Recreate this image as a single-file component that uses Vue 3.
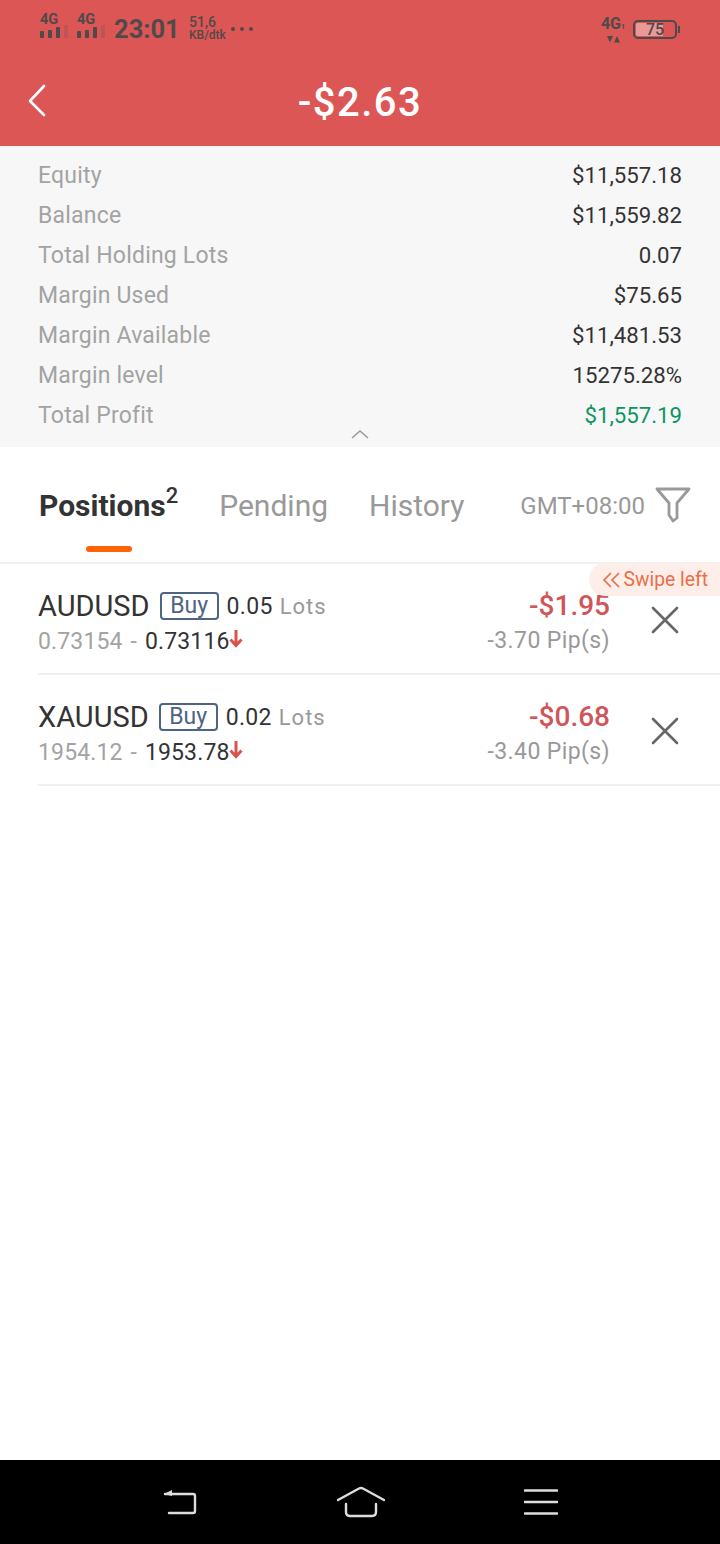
<template>
  <div class="page">
    <header class="top">
      <div class="status">
        <div class="status-left">
          <div v-for="n in 2" :key="n" class="signal">
            <span class="signal-label">4G</span>
            <span class="bars"><i></i><i></i><i></i><i class="dim"></i></span>
          </div>
          <span class="clock">23:01</span>
          <span class="speed"><span>51,6</span><span>KB/dtk</span></span>
          <span class="dots"><i></i><i></i><i></i></span>
        </div>
        <div class="status-right">
          <div class="net">
            <span class="net-label">4G<small>1</small></span>
            <svg class="net-arrows" width="13" height="7" viewBox="0 0 13 7"><path d="M0 0h6L3 6.500zM7 6.500h6L10 0z" fill="#4f4a4a" /></svg>
          </div>
          <div class="battery">
            <div class="battery-body"><span class="battery-fill"></span><span class="battery-num">75</span></div>
            <span class="battery-tip"></span>
          </div>
        </div>
      </div>
      <div class="title-bar">
        <svg class="back" width="20" height="34" viewBox="0 0 20 34"><path d="M17 2 3 17l14 14" fill="none" stroke="#fff" stroke-width="2.600" stroke-linecap="round" stroke-linejoin="round" /></svg>
        <span class="title">-$2.63</span>
      </div>
    </header>

    <section class="summary">
      <div v-for="row in summary" :key="row.label" class="summary-row">
        <span class="summary-label">{{ row.label }}</span>
        <span class="summary-value" :class="{ green: row.green }">{{ row.value }}</span>
      </div>
      <svg class="collapse" width="20" height="10" viewBox="0 0 20 10"><path d="M2 9l8-7 8 7" fill="none" stroke="#999" stroke-width="1.500" /></svg>
    </section>

    <nav class="tabs">
      <div class="tab active">Positions<sup>2</sup><span class="tab-line"></span></div>
      <div class="tab">Pending</div>
      <div class="tab">History</div>
      <div class="tab-right">
        <span class="gmt">GMT+08:00</span>
        <svg class="filter" width="36" height="36" viewBox="0 0 36 36"><path d="M2 2h32L22 16v15l-4 3M14 16 2 2M14 16v12l4 6" fill="none" stroke="#999" stroke-width="2.800" stroke-linejoin="round" stroke-linecap="round" /></svg>
      </div>
    </nav>

    <div class="list">
      <div class="swipe">
        <svg width="20" height="16" viewBox="0 0 20 16"><path d="M9 1 2 8l7 7M17 1l-7 7 7 7" fill="none" stroke="#e8704a" stroke-width="1.700" /></svg>
        <span>Swipe left</span>
      </div>
      <div v-for="item in positions" :key="item.symbol" class="position">
        <div class="pos-main">
          <div class="pos-top">
            <span class="symbol">{{ item.symbol }}</span>
            <span class="buy">Buy</span>
            <span class="lots">{{ item.lots }}</span>
            <span class="lots-unit">Lots</span>
          </div>
          <div class="pos-bottom">
            <span class="price-open">{{ item.open }} - </span>
            <span class="price-now">{{ item.now }}</span>
            <svg class="down" width="14" height="18" viewBox="0 0 14 18"><path d="M7 0v15M1.500 9.500 7 15.500l5.500-6" fill="none" stroke="#d9534f" stroke-width="3" /></svg>
          </div>
        </div>
        <div class="pos-result">
          <span class="pnl">{{ item.pnl }}</span>
          <span class="pips">{{ item.pips }}</span>
        </div>
        <svg class="close" width="30" height="30" viewBox="0 0 30 30"><path d="M3 3l24 24M27 3 3 27" fill="none" stroke="#666" stroke-width="2.600" stroke-linecap="round" /></svg>
      </div>
    </div>

    <footer class="softkeys">
      <svg width="36" height="30" viewBox="0 0 36 30"><path d="M3 7h28a2 2 0 0 1 2 2v15a2 2 0 0 1-2 2H7" fill="none" stroke="#ddd" stroke-width="2.400" stroke-linecap="round" /><path d="M2 7l8-4v6z" fill="#ddd" /></svg>
      <svg width="48" height="32" viewBox="0 0 48 32"><path d="M1 14 22 2.500q2-1 4 0L47 14M9 18v8q0 4 4 4h22q4 0 4-4v-8" fill="none" stroke="#ddd" stroke-width="2.400" stroke-linecap="round" /></svg>
      <svg width="34" height="28" viewBox="0 0 34 28"><path d="M1 2.500h32M1 14h32M1 25.500h32" fill="none" stroke="#ddd" stroke-width="2.600" stroke-linecap="round" /></svg>
    </footer>
  </div>
</template>

<script setup>
const summary = [
  { label: 'Equity', value: '$11,557.18' },
  { label: 'Balance', value: '$11,559.82' },
  { label: 'Total Holding Lots', value: '0.07' },
  { label: 'Margin Used', value: '$75.65' },
  { label: 'Margin Available', value: '$11,481.53' },
  { label: 'Margin level', value: '15275.28%' },
  { label: 'Total Profit', value: '$1,557.19', green: true }
]

const positions = [
  { symbol: 'AUDUSD', lots: '0.05', open: '0.73154', now: '0.73116', pnl: '-$1.95', pips: '-3.70 Pip(s)' },
  { symbol: 'XAUUSD', lots: '0.02', open: '1954.12', now: '1953.78', pnl: '-$0.68', pips: '-3.40 Pip(s)' }
]
</script>

<style>
html, body {
  margin: 0;
  background: #fff;
}
</style>

<style scoped>
.page {
  width: 720px;
  height: 1544px;
  display: flex;
  flex-direction: column;
  background: #fff;
  font-family: Roboto, "Liberation Sans", sans-serif;
  color: #333;
  overflow: hidden;
}

.top {
  height: 146px;
  flex: none;
  background: #dc5656;
  box-sizing: border-box;
  padding-top: 13px;
}

.status {
  height: 32px;
  display: flex;
  justify-content: space-between;
  padding: 0 40px;
  color: #4f4a4a;
}

.status-left,
.status-right {
  display: flex;
  align-items: center;
}

.signal {
  width: 37px;
  display: flex;
  flex-direction: column;
  align-self: flex-start;
  margin-top: 1px;
}

.signal-label {
  font-size: 14.500px;
  font-weight: 700;
  line-height: 11px;
}

.bars {
  display: flex;
  gap: 4px;
  align-items: flex-end;
  height: 13px;
}

.bars i {
  width: 4px;
  background: #4f4a4a;
  border-radius: 1px;
  height: 7px;
}

.bars i:nth-child(2) { height: 8px; }
.bars i:nth-child(3) { height: 11px; }
.bars i:nth-child(4) { height: 13px; }

.bars i.dim {
  background: rgba(79, 74, 74, 0.2);
}

.clock {
  font-size: 25.500px;
  font-weight: 700;
  width: 75px;
}

.speed {
  display: flex;
  flex-direction: column;
  font-weight: 500;
  font-size: 12px;
  line-height: 13px;
  width: 42px;
}

.speed span:first-child {
  font-size: 14px;
}

.dots {
  display: flex;
  gap: 5px;
}

.dots i {
  width: 4px;
  height: 4px;
  border-radius: 50%;
  background: #4f4a4a;
}

.net {
  display: flex;
  flex-direction: column;
  align-items: center;
  width: 22px;
  margin-right: 9px;
}

.net-label {
  font-size: 16px;
  font-weight: 700;
  line-height: 17px;
  white-space: nowrap;
}

.net-label small {
  font-size: 7px;
}

.battery {
  display: flex;
  align-items: center;
}

.battery-body {
  position: relative;
  width: 38px;
  height: 13px;
  border: 2px solid #4f4a4a;
  border-radius: 5px;
  padding: 1px;
}

.battery-fill {
  display: block;
  width: 72%;
  height: 100%;
  background: rgba(255, 255, 255, 0.4);
  border-radius: 2px 0 0 2px;
}

.battery-num {
  position: absolute;
  inset: 0;
  text-align: center;
  font-size: 16px;
  font-weight: 500;
  line-height: 15px;
}

.battery-tip {
  width: 2px;
  height: 7px;
  background: #4f4a4a;
  margin-left: 1px;
}

.title-bar {
  position: relative;
  height: 56px;
  margin-top: 30px;
  display: flex;
  align-items: center;
  justify-content: center;
}

.back {
  position: absolute;
  left: 27px;
  top: 9px;
}

.title {
  color: #fff;
  font-size: 40px;
  font-weight: 500;
  line-height: 56px;
  letter-spacing: 1.500px;
}

.summary {
  position: relative;
  flex: none;
  height: 301px;
  background: #f7f7f7;
  box-sizing: border-box;
  padding: 9px 38px 0;
}

.summary-row {
  height: 40px;
  display: flex;
  justify-content: space-between;
  align-items: center;
}

.summary-label {
  color: #a3a3a3;
  font-size: 23px;
  letter-spacing: 0.200px;
}

.summary-value {
  color: #333;
  font-size: 22.200px;
}

.summary-value.green {
  color: #0b9660;
}

.collapse {
  position: absolute;
  left: 350px;
  bottom: 8px;
}

.tabs {
  flex: none;
  height: 117px;
  box-sizing: border-box;
  border-bottom: 2px solid #f0f0f0;
  display: flex;
  align-items: flex-start;
  padding: 37px 29px 0 39px;
  gap: 41px;
  font-size: 30px;
  color: #999;
}

.tab {
  position: relative;
  line-height: 44px;
  white-space: nowrap;
}

.tab.active {
  font-weight: 700;
  color: #333;
}

.tab sup {
  font-size: 22px;
  font-weight: 500;
  line-height: 0;
  vertical-align: 13px;
}

.tab-line {
  position: absolute;
  left: 47px;
  top: 62px;
  width: 46px;
  height: 6px;
  border-radius: 3px;
  background: #ff6308;
}

.tab-right {
  margin-left: auto;
  display: flex;
  align-items: center;
  gap: 10px;
  height: 44px;
}

.gmt {
  font-size: 24px;
}

.filter {
  margin-top: -3px;
}

.list {
  position: relative;
  flex: 1;
}

.swipe {
  position: absolute;
  top: -1px;
  right: 0;
  height: 33px;
  padding: 0 12px 0 13px;
  display: flex;
  align-items: center;
  gap: 2px;
  background: #fdeee9;
  border-radius: 17px 0 0 17px;
  color: #e8704a;
  font-size: 19.300px;
}

.position {
  height: 111px;
  margin-left: 38px;
  box-sizing: border-box;
  border-bottom: 2px solid #f0f0f0;
  display: flex;
  align-items: flex-start;
  padding-top: 25px;
}

.pos-main {
  flex: 1;
}

.pos-top {
  display: flex;
  align-items: center;
  height: 34px;
}

.symbol {
  font-size: 29px;
  color: #333;
}

.buy {
  margin-left: 10px;
  width: 59px;
  height: 28px;
  box-sizing: border-box;
  border: 2px solid #4f6484;
  border-radius: 4px;
  color: #4f6484;
  font-size: 23px;
  line-height: 24px;
  text-align: center;
}

.lots {
  margin-left: 8px;
  font-size: 23px;
  letter-spacing: 0.300px;
  color: #333;
}

.lots-unit {
  margin-left: 7px;
  font-size: 22px;
  letter-spacing: 1px;
  color: #999;
}

.pos-bottom {
  display: flex;
  align-items: center;
  height: 30px;
  margin-top: 3px;
  font-size: 23px;
  letter-spacing: 0.150px;
  word-spacing: 2px;
  white-space: pre;
}

.price-open {
  color: #a3a3a3;
}

.price-now {
  color: #333;
}

.down {
  margin-top: -4px;
  margin-left: -1px;
}

.pos-result {
  display: flex;
  flex-direction: column;
  align-items: flex-end;
  margin-right: 40px;
}

.pnl {
  font-size: 28px;
  line-height: 34px;
  font-weight: 500;
  color: #d0555a;
}

.pips {
  font-size: 23px;
  line-height: 30px;
  margin-top: 3px;
  letter-spacing: 0.400px;
  color: #999;
}

.close {
  margin: 16px 40px 0 0;
}

.softkeys {
  flex: none;
  height: 84px;
  background: #000;
  display: flex;
  align-items: center;
  box-sizing: border-box;
  padding: 0 162px;
  justify-content: space-between;
}
</style>
